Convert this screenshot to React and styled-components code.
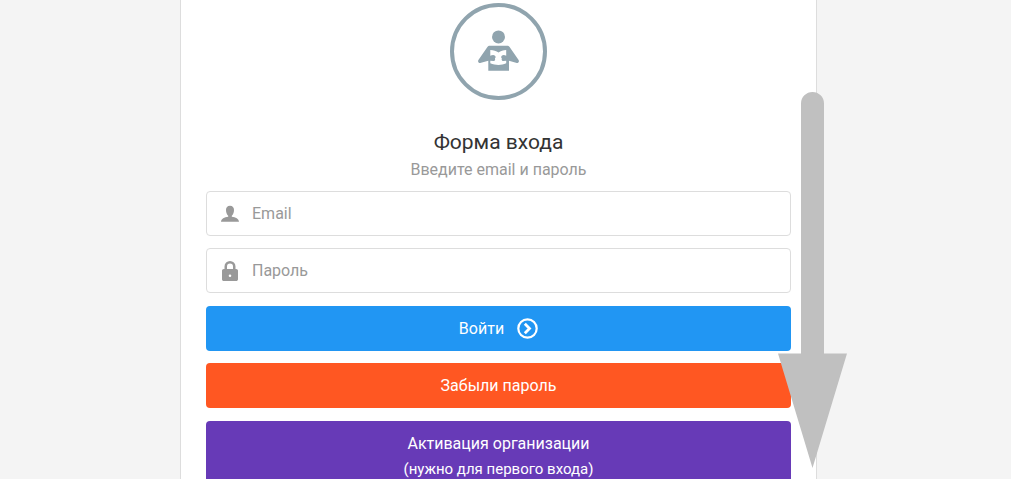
import React from 'react'
import styled, { createGlobalStyle } from 'styled-components'

const GlobalStyle = createGlobalStyle`
  *, *::before, *::after {
    box-sizing: border-box;
  }

  body {
    margin: 0;
    background: #f4f4f4;
    color: #333;
    font-family: Roboto, sans-serif;
    font-size: 16px;
    line-height: 24px;
  }
`

const Page = styled.main`
  position: relative;
  height: 100vh;
  padding: 0 194px 0 180px;
  overflow: hidden;
`

const Card = styled.section`
  min-height: 100vh;
  padding: 3px 25px 25px;
  background: #fff;
  border: solid 1px #ddd;
  border-width: 0 1px;
`

const Header = styled.header`
  display: flex;
  flex-direction: column;
  align-items: center;
  margin-bottom: 9px;
  text-align: center;

  h1 {
    margin: 28px 0 0;
    font-size: 21px;
    font-weight: 400;
    line-height: 28px;
  }

  p {
    margin: 2px 0 0;
    color: #999;
    line-height: 24px;
  }
`

const Avatar = styled.div`
  display: flex;
  justify-content: center;
  align-items: center;
  width: 97px;
  height: 97px;
  color: #90a4ae;
  border: solid 4px currentColor;
  border-radius: 50%;
`

const Form = styled.form`
  display: grid;
  gap: 13px;
`

const Group = styled.div`
  display: grid;
  gap: 12px;
`

const Field = styled.label`
  display: flex;
  align-items: center;
  height: 45px;
  padding-left: 14px;
  color: #999;
  border: solid 1px #ddd;
  border-radius: 4px;

  svg {
    flex: none;
    margin-right: 13px;
  }
`

const Input = styled.input`
  flex: 1;
  min-width: 0;
  height: 100%;
  padding: 0;
  color: #333;
  background: none;
  border: 0;
  outline: 0;
  font: inherit;

  &::placeholder {
    color: #999;
    opacity: 1;
  }
`

const Button = styled.button`
  display: flex;
  justify-content: center;
  align-items: center;
  gap: 13px;
  min-height: 45px;
  padding: 10px 16px;
  color: #fff;
  background: ${ props => props.$color };
  border: 0;
  border-radius: 4px;
  font: inherit;
  line-height: 25px;
  cursor: pointer;

  small {
    display: block;
    font-size: 15px;
    line-height: 26px;
  }
`

const Arrow = styled.svg`
  position: absolute;
  top: 92px;
  right: 164px;
  fill: #c0c0c0;
  pointer-events: none;
`

const ReaderIcon = () => (
  <svg width="43" height="43" viewBox="0 0 43 43" fill="currentColor" aria-hidden="true">
    <circle cx="21.500" cy="6.900" r="6.500" />
    <path d="M13 15.700h17c1.200 0 2 .4 2.600 1.200L41.600 30c.8 1.500 0 3-1.800 3L32 30.800v9.900H11.300v-9.900L3.200 33c-1.800 0-2.600-1.500-1.800-3l9-13.100c.6-.8 1.400-1.200 2.600-1.200z" />
    <path
      fill="#fff"
      d="M13.300 20c3.200.2 6 .8 8.200 2.400 2.200-1.600 4.700-2.200 7.700-2.400v5.700c-1.500-.8-3.400-1-4.400 0-.9.900-.8 2 .1 2.700-.8 1.300.2 2.700 1.600 2.700l2.700-.4v2.600c-2.500 1.100-5 1.700-7.700 1.700s-5.600-.6-8.200-1.700v-2.600l2.900.4c1.500 0 2.500-1.400 1.700-2.700.9-.7 1-1.800.1-2.700-1-1-3-.8-4.700 0z"
    />
  </svg>
)

const UserIcon = () => (
  <svg width="18" height="18" viewBox="0 0 18 18" fill="currentColor" aria-hidden="true">
    <path d="M9 .8c2.600 0 4 1.600 4 4.200 0 2.400-.8 4.600-2.200 5.700v1c3.800.5 7 2.100 7.200 5.100H0c.2-3 3.400-4.600 7.200-5.100v-1C5.800 9.600 5 7.400 5 5 5 2.400 6.400.8 9 .8z" />
  </svg>
)

const LockIcon = () => (
  <svg width="18" height="22" viewBox="0 0 18 22" fill="currentColor" aria-hidden="true">
    <path
      fillRule="evenodd"
      d="M3.500 9V6.500a5.500 5.500 0 0 1 11 0V9h.7c1 0 1.800.8 1.800 1.800v8.400c0 1-.8 1.800-1.800 1.800H2.800C1.800 21 1 20.200 1 19.200v-8.400C1 9.800 1.800 9 2.800 9zM6 9h6V6.500a3 3 0 0 0-6 0zm3 5.500a1.300 1.300 0 1 0 0 2.600 1.300 1.300 0 0 0 0-2.600z"
    />
  </svg>
)

const EnterIcon = () => (
  <svg width="21" height="21" viewBox="0 0 21 21" fill="none" stroke="currentColor" aria-hidden="true">
    <circle cx="10.500" cy="10.500" r="9.200" strokeWidth="2.200" />
    <path d="M7.800 5.800l4.700 4.700-4.700 4.700" strokeWidth="2.800" />
  </svg>
)

const App = () => (
  <>
    <GlobalStyle />
    <Page>
      <Card>
        <Header>
          <Avatar><ReaderIcon /></Avatar>
          <h1>Форма входа</h1>
          <p>Введите email и пароль</p>
        </Header>

        <Form onSubmit={e => e.preventDefault()}>
          <Group>
            <Field>
              <UserIcon />
              <Input type="email" placeholder="Email" aria-label="Email" />
            </Field>
            <Field>
              <LockIcon />
              <Input type="password" placeholder="Пароль" aria-label="Пароль" />
            </Field>
          </Group>

          <Group>
            <Button type="submit" $color="#2196f3">
              Войти
              <EnterIcon />
            </Button>
            <Button type="button" $color="#ff5722">Забыли пароль</Button>
          </Group>

          <Button type="button" $color="#673ab7">
            <span>
              Активация организации
              <small>(нужно для первого входа)</small>
            </span>
          </Button>
        </Form>
      </Card>

      {/* Scroll down hint */}
      <Arrow width="69" height="376" viewBox="0 0 69 376" aria-hidden="true">
        <path d="M23 261.500V11.500a11.500 11.500 0 0 1 23 0v250h23L34.500 376 0 261.500z" />
      </Arrow>
    </Page>
  </>
)

export default App
